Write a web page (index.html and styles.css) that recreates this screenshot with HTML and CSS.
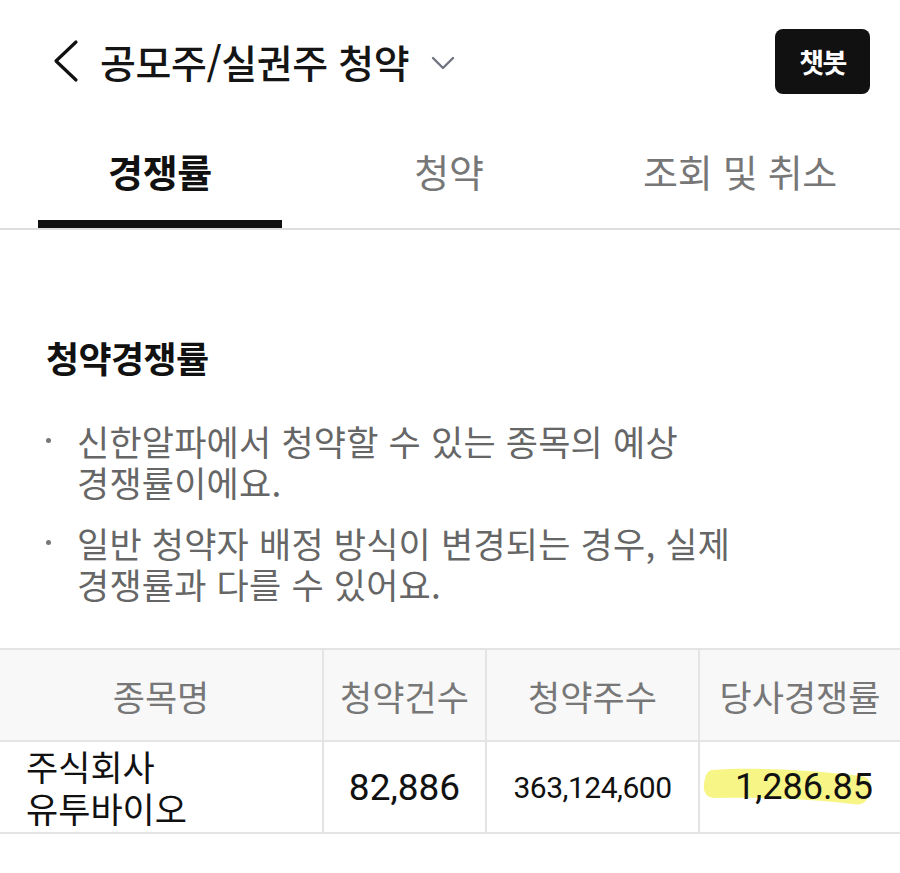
FILE: index.html
```html
<!DOCTYPE html>
<html lang="ko">
<head>
<meta charset="utf-8">
<link rel="stylesheet" href="styles.css">
</head>
<body>
<div class="page">
  <header class="topbar">
    <div class="title-wrap">
      <svg class="back" width="30" height="44" viewBox="0 0 30 44"><path d="M26 3 L6 22 L26 41" fill="none" stroke="#111" stroke-width="3.2" stroke-linecap="round" stroke-linejoin="round"/></svg>
      <h1 class="title">공모주/실권주 청약</h1>
      <svg class="caret" width="24" height="14" viewBox="0 0 24 14"><path d="M2 2 L12 12 L22 2" fill="none" stroke="#6f7480" stroke-width="2.4" stroke-linecap="round" stroke-linejoin="round"/></svg>
    </div>
    <button class="chatbot">챗봇</button>
  </header>

  <nav class="tabs">
    <div class="tab active">경쟁률</div>
    <div class="tab">청약</div>
    <div class="tab">조회 및 취소</div>
  </nav>

  <section class="content">
    <h2 class="section-title">청약경쟁률</h2>
    <ul class="notes">
      <li>신한알파에서 청약할 수 있는 종목의 예상<br>경쟁률이에요.</li>
      <li>일반 청약자 배정 방식이 변경되는 경우, 실제<br>경쟁률과 다를 수 있어요.</li>
    </ul>
  </section>

  <table class="rates">
    <thead>
      <tr>
        <th class="c1">종목명</th>
        <th class="c2">청약건수</th>
        <th class="c3">청약주수</th>
        <th class="c4">당사경쟁률</th>
      </tr>
    </thead>
    <tbody>
      <tr>
        <td class="name">주식회사<br>유투바이오</td>
        <td class="num big">82,886</td>
        <td class="num small">363,124,600</td>
        <td class="num big rate"><span class="hl-wrap"><svg class="hl" width="172" height="46" viewBox="0 0 172 46"><path d="M10 4 C50 1 110 4 160 10 C168 12 170 18 168 26 C166 36 160 40 150 38 C110 33 60 31 14 32 C4 32 1 26 2 18 C3 10 5 5 10 4 Z" fill="#f3f15e" fill-opacity="0.75"/></svg><span class="rate-val">1,286.85</span></span></td>
      </tr>
    </tbody>
  </table>
</div>
</body>
</html>
```

FILE: styles.css
```css
* { box-sizing: border-box; }
html, body { margin: 0; padding: 0; background: #fff; }
body {
  font-family: "Noto Sans CJK KR", "Noto Sans", sans-serif;
  color: #111;
}
.page { width: 900px; }

.topbar {
  height: 122px;
  display: flex;
  align-items: center;
  justify-content: space-between;
  padding: 0 30px 0 50px;
}
.title-wrap { display: flex; align-items: center; }
.back { margin-right: 20px; }
.title {
  margin: 0;
  font-size: 39px;
  font-weight: 500;
  letter-spacing: -0.4px;
  color: #151515;
}
.caret { margin-left: 22px; margin-top: 4px; }
.chatbot {
  width: 95px;
  height: 65px;
  border: 0;
  border-radius: 8px;
  background: #111;
  color: #fff;
  font-family: "Noto Sans CJK KR", sans-serif;
  font-size: 27px;
  font-weight: 700;
  letter-spacing: -1.5px;
}

.tabs {
  display: grid;
  grid-template-columns: 244px 334px 248px;
  padding-left: 38px;
  border-bottom: 2px solid #dedede;
  height: 108px;
}
.tab {
  display: flex;
  align-items: center;
  justify-content: center;
  font-size: 38px;
  color: #777;
  letter-spacing: -0.3px;
  padding-bottom: 10px;
}
.tab.active {
  color: #111;
  font-weight: 700;
  border-bottom: 8px solid #111;
  padding-bottom: 2px;
}

.content { padding: 102px 46px 0 46px; }
.section-title {
  margin: 0;
  font-size: 36px;
  font-weight: 700;
  letter-spacing: -0.6px;
  line-height: 50px;
}
.notes {
  list-style: none;
  margin: 38px 0 0 0;
  padding: 0;
}
.notes li {
  position: relative;
  padding-left: 31px;
  font-size: 35px;
  line-height: 41px;
  color: #666;
  letter-spacing: 0.2px;
  margin-bottom: 20px;
}
.notes li::before {
  content: "";
  position: absolute;
  left: 0;
  top: 18px;
  width: 5px;
  height: 5px;
  border-radius: 50%;
  background: #777;
}

.rates {
  margin-top: 44px;
  width: 900px;
  border-collapse: collapse;
  table-layout: fixed;
}
.rates th, .rates td {
  border: 2px solid #e4e4e4;
  padding: 0;
}
.rates tr > :first-child { border-left: 0; }
.rates tr > :last-child { border-right: 0; }
.rates th {
  height: 92px;
  background: #f8f8f8;
  font-weight: 400;
  font-size: 35px;
  color: #777;
  letter-spacing: 0;
}
.c1 { width: 323px; }
.c2 { width: 163px; }
.c3 { width: 213px; }
.c4 { width: 201px; }
.rates td { height: 92px; }
.name {
  font-size: 35px;
  line-height: 42px;
  padding-left: 26px !important;
  color: #111;
  letter-spacing: 0;
}
.num {
  font-family: Roboto, "Noto Sans", sans-serif;
  text-align: center;
  color: #111;
}
.big { font-size: 37px; }
.small { font-size: 30px; letter-spacing: -0.5px; }
.rate { text-align: right; padding-right: 27px !important; font-size: 36px; }
.hl-wrap { position: relative; display: inline-block; }
.hl { position: absolute; left: -33px; top: 0; }
.rate-val { position: relative; }
```
